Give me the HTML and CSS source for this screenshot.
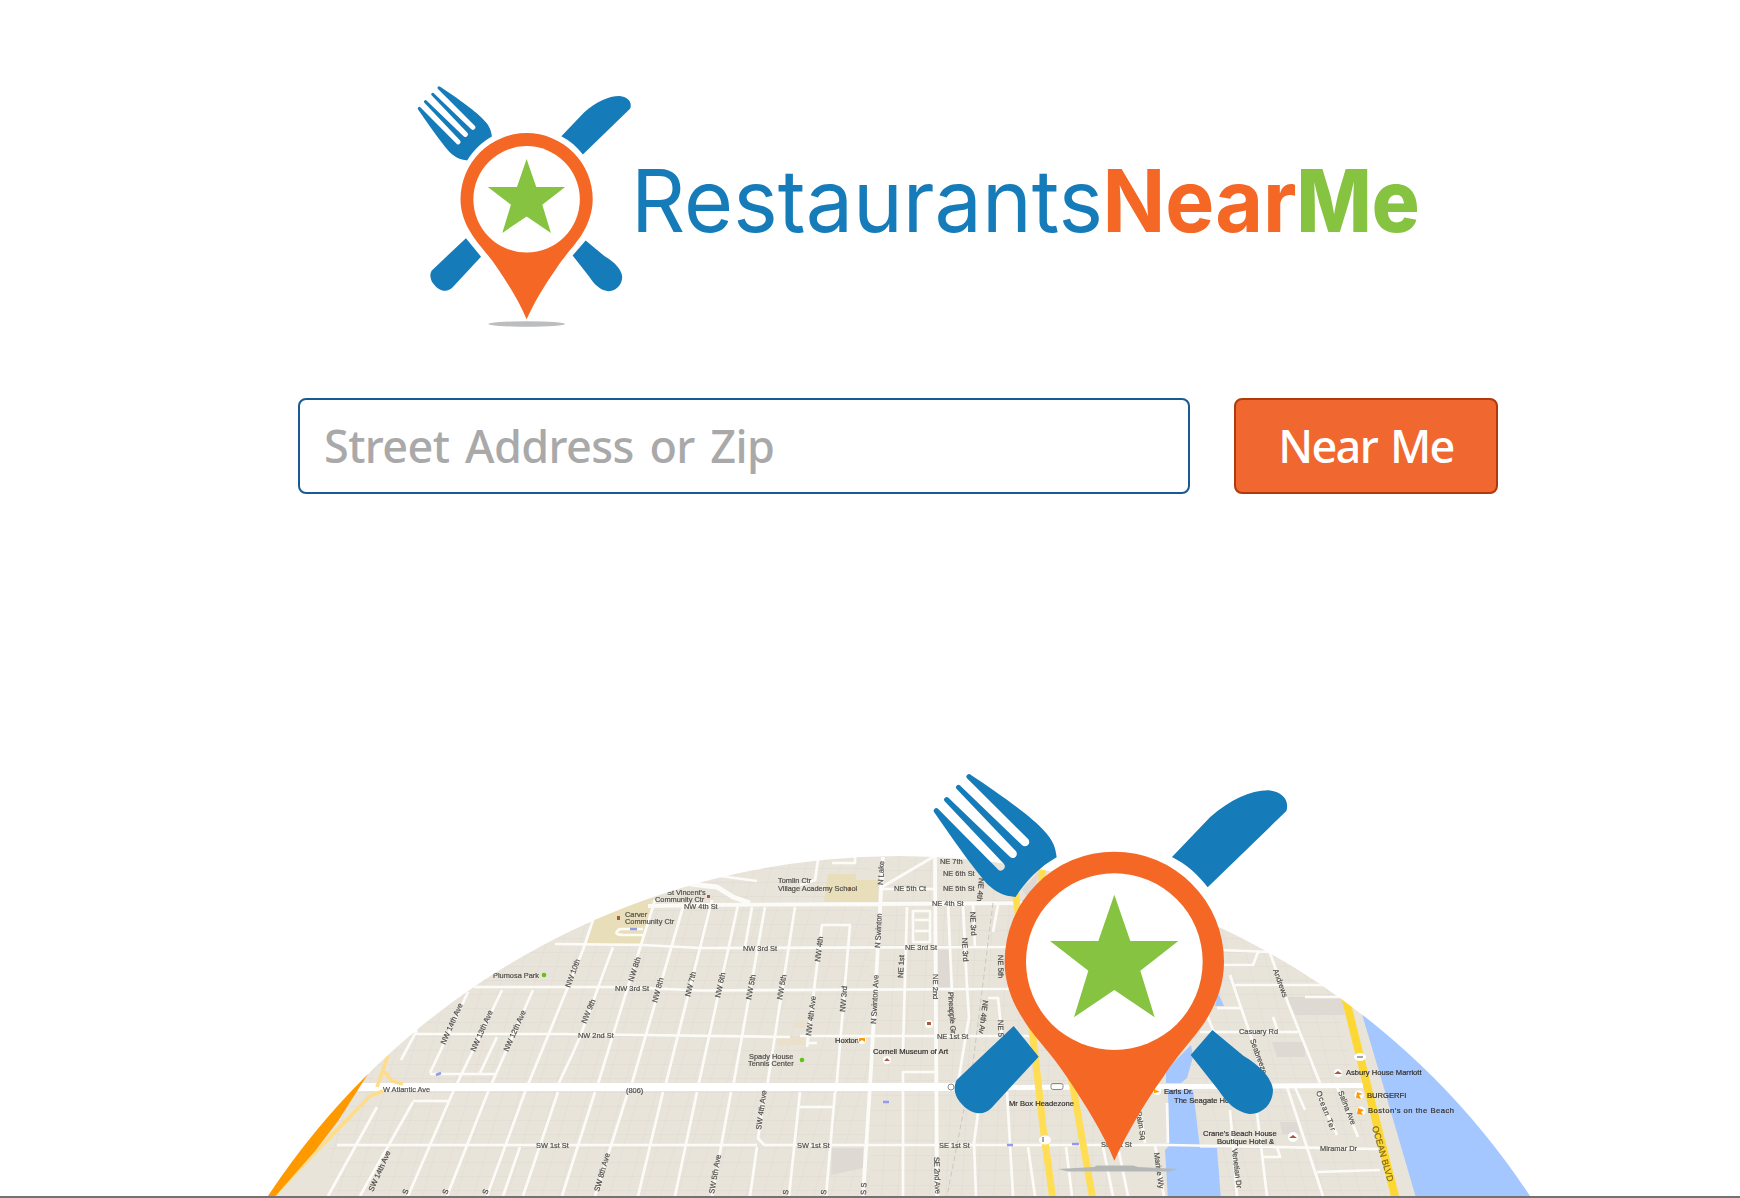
FILE: index.html
```html
<!DOCTYPE html>
<html lang="en">
<head>
<meta charset="utf-8">
<title>RestaurantsNearMe</title>
<link rel="stylesheet" href="styles.css">
</head>
<body>
<svg class="defs" width="0" height="0" aria-hidden="true">
  <symbol id="mark" viewBox="90 60 1090 1220">
    <g class="utensil">
      <path d="M213 75C300 132 400 205 430 240C460 270 467 295 470 322C420 350 375 395 347 441C320 437 295 435 258 398C205 335 150 255 102 186A8 8 0 0 1 114 176L292 356A11 11 0 0 0 312 342L134 154A7 7 0 0 1 146 144L328 319A12 12 0 0 0 348 304L170 117A7 7 0 0 1 181 107L365 284A12 12 0 0 0 385 268L201 85A7 7 0 0 1 213 75Z"/>
      <path d="M816 321L930 202C990 150 1050 121 1105 121C1145 124 1170 150 1159 183L923 412C895 375 860 343 816 321Z"/>
      <path d="M341 828L416 920L275 1073C245 1105 200 1090 172 1045C160 1020 163 1005 170 990Z"/>
      <path d="M937 840L1030 917C1085 950 1115 985 1119 1020C1118 1065 1085 1092 1048 1092C1010 1085 985 1065 955 1020L872 915Z"/>
    </g>
    <path class="pin" d="M643 1232C610 1150 560 1070 500 980C440 890 400 865 350 775C325 725 314 680 314 635A329 330 0 0 1 972 635C972 700 950 760 915 815C870 880 840 905 790 980C730 1065 680 1150 643 1232Z"/>
    <circle cx="643" cy="635" r="265" fill="#fff"/>
    <path class="star" d="M643 434L691 573H835L721 662L764 802L643 720L522 802L565 662L450 573H595Z"/>
  </symbol>
</svg>

<header class="brand">
  <svg class="logo" viewBox="416 80 1004 250" role="img" aria-label="RestaurantsNearMe">
    <ellipse cx="526.700" cy="324" rx="38.500" ry="2.700" fill="#bbbdbf"/>
    <use href="#mark" x="415.500" y="83.800" width="219" height="245.200"/>
    <text class="word word-a" x="631" y="232" textLength="472" lengthAdjust="spacingAndGlyphs">Restaurants</text>
    <text class="word word-b" x="1102.500" y="232" textLength="194" lengthAdjust="spacingAndGlyphs">Near</text>
    <text class="word word-c" x="1296.500" y="232" textLength="123" lengthAdjust="spacingAndGlyphs">Me</text>
  </svg>
</header>

<form class="search">
  <input class="address" type="text" placeholder="Street Address or Zip">
  <button class="go" type="button">Near Me</button>
</form>

<section class="scene">
<svg class="map" viewBox="0 760 1740 436">
  <defs>
    <clipPath id="disc"><circle cx="899" cy="1611.5" r="755.5"/></clipPath>
    <pattern id="lots" width="17" height="14" patternUnits="userSpaceOnUse" patternTransform="skewX(-16)"><path d="M0 0H17M0 0V14" class="lot"/></pattern>
    <pattern id="lots2" width="16" height="15" patternUnits="userSpaceOnUse" patternTransform="skewX(-3)"><path d="M0 0H16M0 0V15" class="lot"/></pattern>
    <pattern id="lots3" width="18" height="14" patternUnits="userSpaceOnUse" patternTransform="skewX(14)"><path d="M0 0H18M0 0V14" class="lot"/></pattern>
  </defs>
  <g clip-path="url(#disc)">
    <g class="soft">
    <path fill="#e8e4da" d="M140 840H1640V1210H140Z"/>
    <path fill="url(#lots)" d="M330 840H870V1210H330Z"/>
    <path fill="url(#lots2)" d="M870 840H1120V1210H870Z"/>
    <path fill="url(#lots3)" d="M1190 900H1310L1390 1210H1190Z"/>
    <!-- blocks -->
    <path fill="#e8deb9" d="M595 915L655 890L643 943H587ZM828 874H856V880H878V902H824Z"/>
    <path fill="#ebe0ca" d="M777 1037H805V1045H777ZM795 1021H805V1028H795Z"/>
    <path fill="#ded9d2" d="M938 950H950V987H938ZM832 1148H863V1168L831 1175ZM1287 997H1342L1345 1015H1295ZM1272 1042H1305V1057H1277ZM1280 1122H1297L1300 1134H1282ZM1022 890L1042 868L1030 900Z"/>
    <!-- water -->
    <g class="water">
      <path d="M1166 1070L1191 1045L1193 1057L1187 1078L1181 1083H1166ZM1168 1090H1193L1200 1148H1217L1221 1200H1168L1165 1150L1169 1146ZM1218 993L1224 1006H1215Z"/>
      <path d="M1355 1003L1362 1025L1380 1087L1415 1200H1560V1003Z"/>
    </g>
    <path d="M1355 1003L1380 1087L1413 1200" stroke="#e8e4da" stroke-width="7" fill="none"/>
    <!-- side streets -->
    <g class="road">
      <path d="M474 987L620 987L700 990.500L1010 989M415 1034H560L790 1037M800 1036H1110M555 944L643 945L700 948L1010 947M337 1145H757M764 1145H1168M1168 1145L1378 1149M430 1074H497M413 1101H450"/>
      <path d="M468 992L430 1073M417 1030L401 1060M502 990L453 1092M533 990L488 1092M497 1037L480 1073M593 920L583 950L525 1092M613 947L580 1037L572 1055L557 1087M655 900L630 980L597 1087M683 907L632 1083M712 900L665 1087M738 905L698 1087M765 907L733 1087M795 907L767 1087M752 907L745 947"/>
      <path d="M377 1107L328 1196M413 1102L360 1196M453 1092L408 1196M488 1092L447 1196M525 1092L487 1196M558 1092L523 1196M520 1147L503 1196M595 1092L562 1196M628 1092L595 1196M663 1092L638 1196M697 1092L675 1196M731 1092L712 1196M765 1092L758 1138L764 1145M757 1147L750 1196M800 1092L789 1196M835 1092L826 1196M800 1107H833"/>
      <path d="M807 1047L822 925H850L836 1092M807 1043H817M907 907L903 1050M948 903L952 993M963 905L967 987L969 1017L958 1083M903 1196V1072H935M988 998H998L1002 1037M973 905L975 947M978 1113L974 1143L976 1196M1007 1092L1013 1196M913 911H930V942H913ZM915 920H929M915 931H929M998 905L993 932"/>
      <path d="M720 876L757 881M818 860L815 880L800 885M832 863H855V855M882 887L933 857M882 889H935M655 906H690"/>
      <path d="M1270 953L1288 1003L1320 1083M1287 1087L1323 1196M1295 1087L1305 1110M1230 975L1252 1040L1263 1075M1235 985H1325M1305 997H1340M1217 1008H1240M1200 1032H1298M1273 1017L1278 1032M1220 950L1270 952M1258 952L1253 965H1220M1317 1092L1337 1135M1337 1087L1358 1137M1317 1172L1380 1170M1230 1110L1237 1196M1257 1113L1267 1196M1263 1157H1280L1277 1147M1167 1103L1168 1143M1028 1147L1035 1196M1066 1147L1072 1196M1103 1147L1113 1196M1118 1147L1128 1196M1155 1145L1164 1196M1140 1110L1145 1143M1205 1010L1215 1035"/>
    </g>
    <path class="road wide" d="M648 906L690 905L880 904L1050 903M883 857L870 1087L863 1196M935 857L937 1196"/>
    <path class="road curve" d="M690 884L717 887L733 897L750 903"/>
    <path class="rail" d="M993 903L973 1063L947 1196"/>
    <path class="road avenue" d="M357 1087H1000"/>
    <path class="road avenue-e" d="M995 1087.500L1363 1085.500"/>
    <!-- highways -->
    <path d="M388 1055L383 1070L377 1087M383 1070L392 1081L403 1084M383 1091L370 1096L275 1194" fill="none" stroke="#ffdd88" stroke-width="3.500"/>
    <path d="M368 1074L350 1086L255 1206L272 1200L315 1151L338 1121Z" fill="#f90"/>
    <path class="hwy" d="M1042 866L1042 940L1073 1087L1093 1200M1015 890L1017 905L1033 1037L1043 1127L1053 1200"/>
    <path class="hwy coast" d="M1344 992L1365 1077L1397 1204"/>
    <path d="M643 929H620Q612 934 622 935H645" class="road"/>
    <!-- map labels -->
    <g class="label">
      <text x="493" y="978">Plumosa Park</text><text x="615" y="991">NW 3rd St</text><text x="578" y="1038">NW 2nd St</text><text x="743" y="951">NW 3rd St</text>
      <text x="383" y="1092">W Atlantic Ave</text><text x="536" y="1148">SW 1st St</text><text x="797" y="1148">SW 1st St</text><text x="939" y="1148">SE 1st St</text><text x="1101" y="1147">SE 1st St</text>
      <text x="625" y="917">Carver</text><text x="625" y="924">Community Ctr</text><text x="667" y="895">St Vincent's</text><text x="655" y="902">Community Ctr</text><text x="684" y="909">NW 4th St</text>
      <text x="778" y="883">Tomlin Ctr</text><text x="778" y="891">Village Academy School</text><text x="894" y="891">NE 5th Ct</text><text x="943" y="891">NE 5th St</text><text x="943" y="876">NE 6th St</text><text x="940" y="864">NE 7th</text><text x="932" y="906">NE 4th St</text><text x="905" y="950">NE 3rd St</text><text x="937" y="1039">NE 1st St</text>
      <text x="626" y="1093">(806)</text><text x="749" y="1059">Spady House</text><text x="748" y="1066">Tennis Center</text>
      <text x="1239" y="1034">Casuary Rd</text><text x="1320" y="1151">Miramar Dr</text>
    </g>
    <g class="label dark">
      <text x="835" y="1043">Hoxton</text><text x="873" y="1054">Cornell Museum of Art</text><text x="1009" y="1106">Mr Box Headezone</text><text x="1164" y="1094">Earls Dr.</text><text x="1174" y="1103">The Seagate Ho</text>
      <text x="1203" y="1136">Crane's Beach House</text><text x="1217" y="1144">Boutique Hotel &amp;</text><text x="1346" y="1075">Asbury House Marriott</text><text x="1367" y="1098">BURGERFI</text><text x="1368" y="1113" textLength="86">Boston's on the Beach</text>
    </g>
    <g class="label street">
      <text transform="translate(445 1045)rotate(-66)">NW 14th Ave</text><text transform="translate(475 1052)rotate(-66)">NW 13th Ave</text><text transform="translate(508 1052)rotate(-66)">NW 12th Ave</text><text transform="translate(570 988)rotate(-70)">NW 10th</text><text transform="translate(586 1024)rotate(-68)">NW 9th</text><text transform="translate(633 982)rotate(-72)">NW 8th</text><text transform="translate(657 1003)rotate(-75)">NW 8th</text><text transform="translate(690 997)rotate(-76)">NW 7th</text><text transform="translate(720 998)rotate(-78)">NW 6th</text><text transform="translate(751 1000)rotate(-79)">NW 5th</text><text transform="translate(782 1000)rotate(-80)">NW 5th</text>
      <text transform="translate(820 962)rotate(-83)">NW 4th</text><text transform="translate(811 1036)rotate(-83)">NW 4th Ave</text><text transform="translate(845 1012)rotate(-85)">NW 3rd</text><text transform="translate(876 1024)rotate(-87)">N Swinton Ave</text><text transform="translate(880 948)rotate(-87)">N Swinton</text><text transform="translate(883 885)rotate(-87)">N Lake</text><text transform="translate(903 978)rotate(-87)">NE 1st</text><text transform="translate(933 974)rotate(90)">NE 2nd</text><text transform="translate(948 992)rotate(86)" textLength="42">Pineapple Gr</text><text transform="translate(962 938)rotate(87)">NE 3rd</text><text transform="translate(970 912)rotate(87)">NE 3rd</text><text transform="translate(979 878)rotate(95)">NE 4th</text><text transform="translate(983 1000)rotate(97)">NE 4th Av</text><text transform="translate(998 955)rotate(89)">NE 5th</text><text transform="translate(998 1020)rotate(89)">NE 5</text>
      <text transform="translate(373 1192)rotate(-66)">SW 14th Ave</text><text transform="translate(599 1192)rotate(-74)">SW 8th Ave</text><text transform="translate(714 1194)rotate(-80)">SW 5th Ave</text><text transform="translate(761 1130)rotate(-82)">SW 4th Ave</text><text transform="translate(934 1157)rotate(88)" textLength="37">SE 2nd Ave</text><text transform="translate(407 1195)rotate(-70)">S</text><text transform="translate(447 1195)rotate(-70)">S</text><text transform="translate(487 1195)rotate(-70)">S</text><text transform="translate(788 1195)rotate(-84)">S</text><text transform="translate(826 1195)rotate(-84)">S</text><text transform="translate(866 1195)rotate(-88)">S S</text>
      <text transform="translate(1273 970)rotate(70)">Andrews</text><text transform="translate(1250 1040)rotate(70)">Seabreeze</text><text transform="translate(1316 1092)rotate(69)" textLength="42">Ocean Ter</text><text transform="translate(1338 1092)rotate(68)">Salina Ave</text><text transform="translate(1232 1149)rotate(83)">Venetian Dr</text><text transform="translate(1136 1112)rotate(80)">Palm Sq</text><text transform="translate(1154 1153)rotate(82)">Marine Wy</text><text transform="translate(1372 1127)rotate(74)" class="big">OCEAN BLVD</text>
    </g>
    <!-- places -->
    <g fill="#fff"><circle cx="862" cy="1040" r="4"/><circle cx="887" cy="1060" r="4"/><circle cx="929" cy="1024" r="4"/><circle cx="1338" cy="1073" r="4"/><circle cx="1359" cy="1095" r="4.500"/><circle cx="1361" cy="1111" r="4.500"/><circle cx="1293" cy="1137" r="5"/><circle cx="1157" cy="1091" r="4"/><ellipse cx="1360" cy="1057" rx="6" ry="4"/><ellipse cx="1045" cy="1140" rx="6" ry="4.500"/></g>
    <path fill="#f90" d="M859 1038H865V1042L862 1040L859 1042ZM1357 1092L1363 1094L1359 1095L1361 1099L1356 1098ZM1358 1108L1364 1110L1361 1112L1363 1115L1357 1114ZM1154 1089L1160 1092L1154 1093Z"/>
    <path fill="#a65c40" d="M884 1061L887 1058L890 1061ZM927 1025V1022H931V1025ZM1334 1074L1338 1071L1342 1074ZM1289 1138L1293 1135L1297 1138ZM617 916H620V920H617ZM849 887H851V891H849ZM707 895H710V898H707Z"/>
    <g fill="#5fc416"><circle cx="544" cy="975" r="2.300"/><circle cx="802" cy="1060" r="2.300"/></g>
    <g fill="none" stroke="#8a8a88"><path d="M1043 1137V1142M1357 1057H1363" stroke-width="1.500"/><rect x="1051" y="1083.500" width="12" height="6" rx="2"/><circle cx="951" cy="1087" r="3"/></g>
    <path d="M436 1075L441 1073M630 929H637M883 1102H889M1007 1145H1013M1072 1144H1079" stroke="#929bea" stroke-width="2.500"/>
    </g>
  </g>
  <path d="M1058 1169L1094 1167L1097 1165.500H1133L1138 1167L1178 1169L1170 1171.500H1068Z" fill="#b5b7b7"/>
  <use href="#mark" x="930" y="770" width="363.330" height="406.670"/>
</svg>
</section>
</body>
</html>
```
FILE: styles.css
```css
* { box-sizing: border-box; }
body {
  margin: 0;
  width: 1740px;
  height: 1198px;
  display: flex;
  flex-direction: column;
  overflow: hidden;
  background: #fff;
  font-family: "Noto Sans", "Open Sans", sans-serif;
}
.defs { display: none; }
.brand { padding: 80px 0 0 416px; height: 398px; }
.logo { display: block; width: 1004px; height: 250px; overflow: visible; }
.utensil { fill: #167bb9; }
.pin { fill: #f46724; }
.star { fill: #85c340; }
.word { font-family: Inter, sans-serif; font-size: 86px; }
.word-a { fill: #167bb9; font-weight: 400; }
.word-b { fill: #f46724; font-weight: 700; }
.word-c { fill: #85c340; font-weight: 800; }

.search { display: flex; gap: 44px; padding-left: 298px; height: 96px; }
.address, .go {
  height: 96px;
  border-radius: 8px;
  font-family: inherit;
  font-size: 45px;
  font-weight: 500;
}
.address {
  width: 892px;
  padding: 0 24px 2px;
  border: 2px solid #175a94;
  background: #fff;
  letter-spacing: -.6px;
  word-spacing: 4.5px;
  outline: none;
}
.address::placeholder { color: #a9a9a9; opacity: 1; }
.go {
  width: 264px;
  padding: 0 0 2px;
  border: 2px solid #b13a0c;
  background: #f0672f;
  color: #fff;
  letter-spacing: -1.7px;
  word-spacing: 3px;
}

.scene { margin-top: auto; height: 438px; border-bottom: 2px solid #727272; }
.map { display: block; width: 1740px; height: 436px; }
.soft { filter: blur(.6px); }
.lot { fill: none; stroke: #d9d6d1; stroke-width: .7; }
.water { fill: #a4c7ff; }
.road { fill: none; stroke: #fcfbf8; stroke-width: 2.7; stroke-linejoin: round; }
.wide { stroke-width: 3.8; }
.curve { stroke-width: 5; }
.avenue { stroke: #fff; stroke-width: 8; }
.avenue-e { stroke: #fff; stroke-width: 5; }
.rail { fill: none; stroke: #c9c8c4; stroke-width: 1; stroke-dasharray: 5 3; }
.hwy { fill: none; stroke: #ffde55; stroke-width: 7; }
.coast { stroke: #fdd835; stroke-width: 8; }
.label { font-family: "Liberation Sans", sans-serif; font-size: 7.4px; fill: #504e4a; stroke: #504e4a; stroke-width: .2; }
.dark { font-size: 7.6px; fill: #33312f; stroke: #33312f; }
.street { font-size: 7.6px; }
.big { font-size: 9px; fill: #806a16; stroke: #806a16; }
```
